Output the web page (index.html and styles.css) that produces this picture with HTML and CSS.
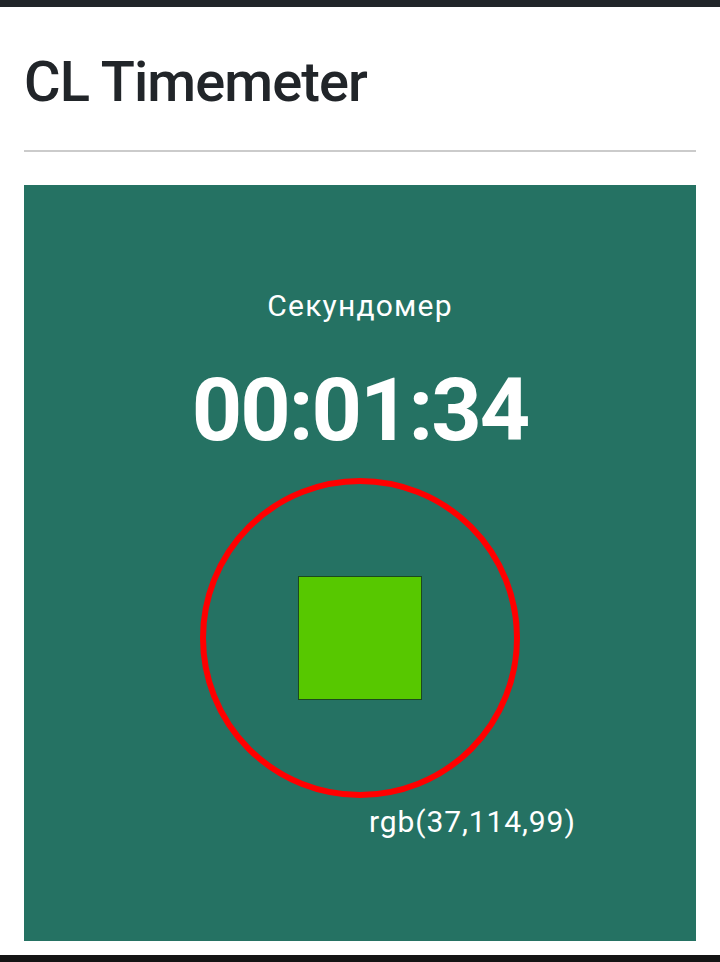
FILE: index.html
```html
<!DOCTYPE html>
<html lang="ru">
<head>
<meta charset="utf-8">
<title>CL Timemeter</title>
<link rel="stylesheet" href="styles.css">
</head>
<body>
<div class="topbar"></div>
<main class="container">
  <h1 class="title">CL Timemeter</h1>
  <hr class="divider">
  <section class="panel">
    <div class="label">Секундомер</div>
    <div class="time">00:01:34</div>
    <div class="ring">
      <div class="stop"></div>
    </div>
    <div class="color-code">rgb(37,114,99)</div>
  </section>
</main>
<div class="bottombar"></div>
</body>
</html>
```

FILE: styles.css
```css
html, body {
  margin: 0;
  padding: 0;
  background: #fff;
}
body {
  font-family: Roboto, "Noto Sans", sans-serif;
  color: #212529;
  height: 962px;
  display: flex;
  flex-direction: column;
  overflow: hidden;
}
.topbar {
  height: 7px;
  background: #212529;
  flex: none;
}
.container {
  padding: 0 24px;
  flex: 1;
}
.title {
  margin: 42px 0 34px;
  font-size: 56px;
  font-weight: 500;
  letter-spacing: -0.9px;
  line-height: 1.2;
}
.divider {
  margin: 0;
  border: 0;
  height: 2px;
  background: #cbcbcb;
}
.panel {
  margin-top: 33px;
  height: 756px;
  background: rgb(37,114,99);
  color: #fff;
  display: flex;
  flex-direction: column;
  align-items: center;
  padding-top: 103px;
  box-sizing: border-box;
}
.label {
  font-size: 30px;
  letter-spacing: 1.2px;
  line-height: 1.2;
}
.time {
  margin-top: 33px;
  font-size: 88px;
  font-weight: 700;
  letter-spacing: -2px;
  line-height: 1.2;
}
.ring {
  margin-top: 15px;
  width: 320px;
  height: 320px;
  box-sizing: border-box;
  border: 6px solid #ff0000;
  border-radius: 50%;
  display: flex;
  align-items: center;
  justify-content: center;
}
.stop {
  width: 124px;
  height: 124px;
  box-sizing: border-box;
  background: #57c800;
  border: 1px solid #1b4a1e;
}
.color-code {
  align-self: flex-start;
  margin-left: 345px;
  margin-top: 6px;
  font-size: 30px;
  letter-spacing: 0.9px;
  line-height: 1.2;
}
.bottombar {
  height: 7px;
  background: #141414;
  flex: none;
}
```
